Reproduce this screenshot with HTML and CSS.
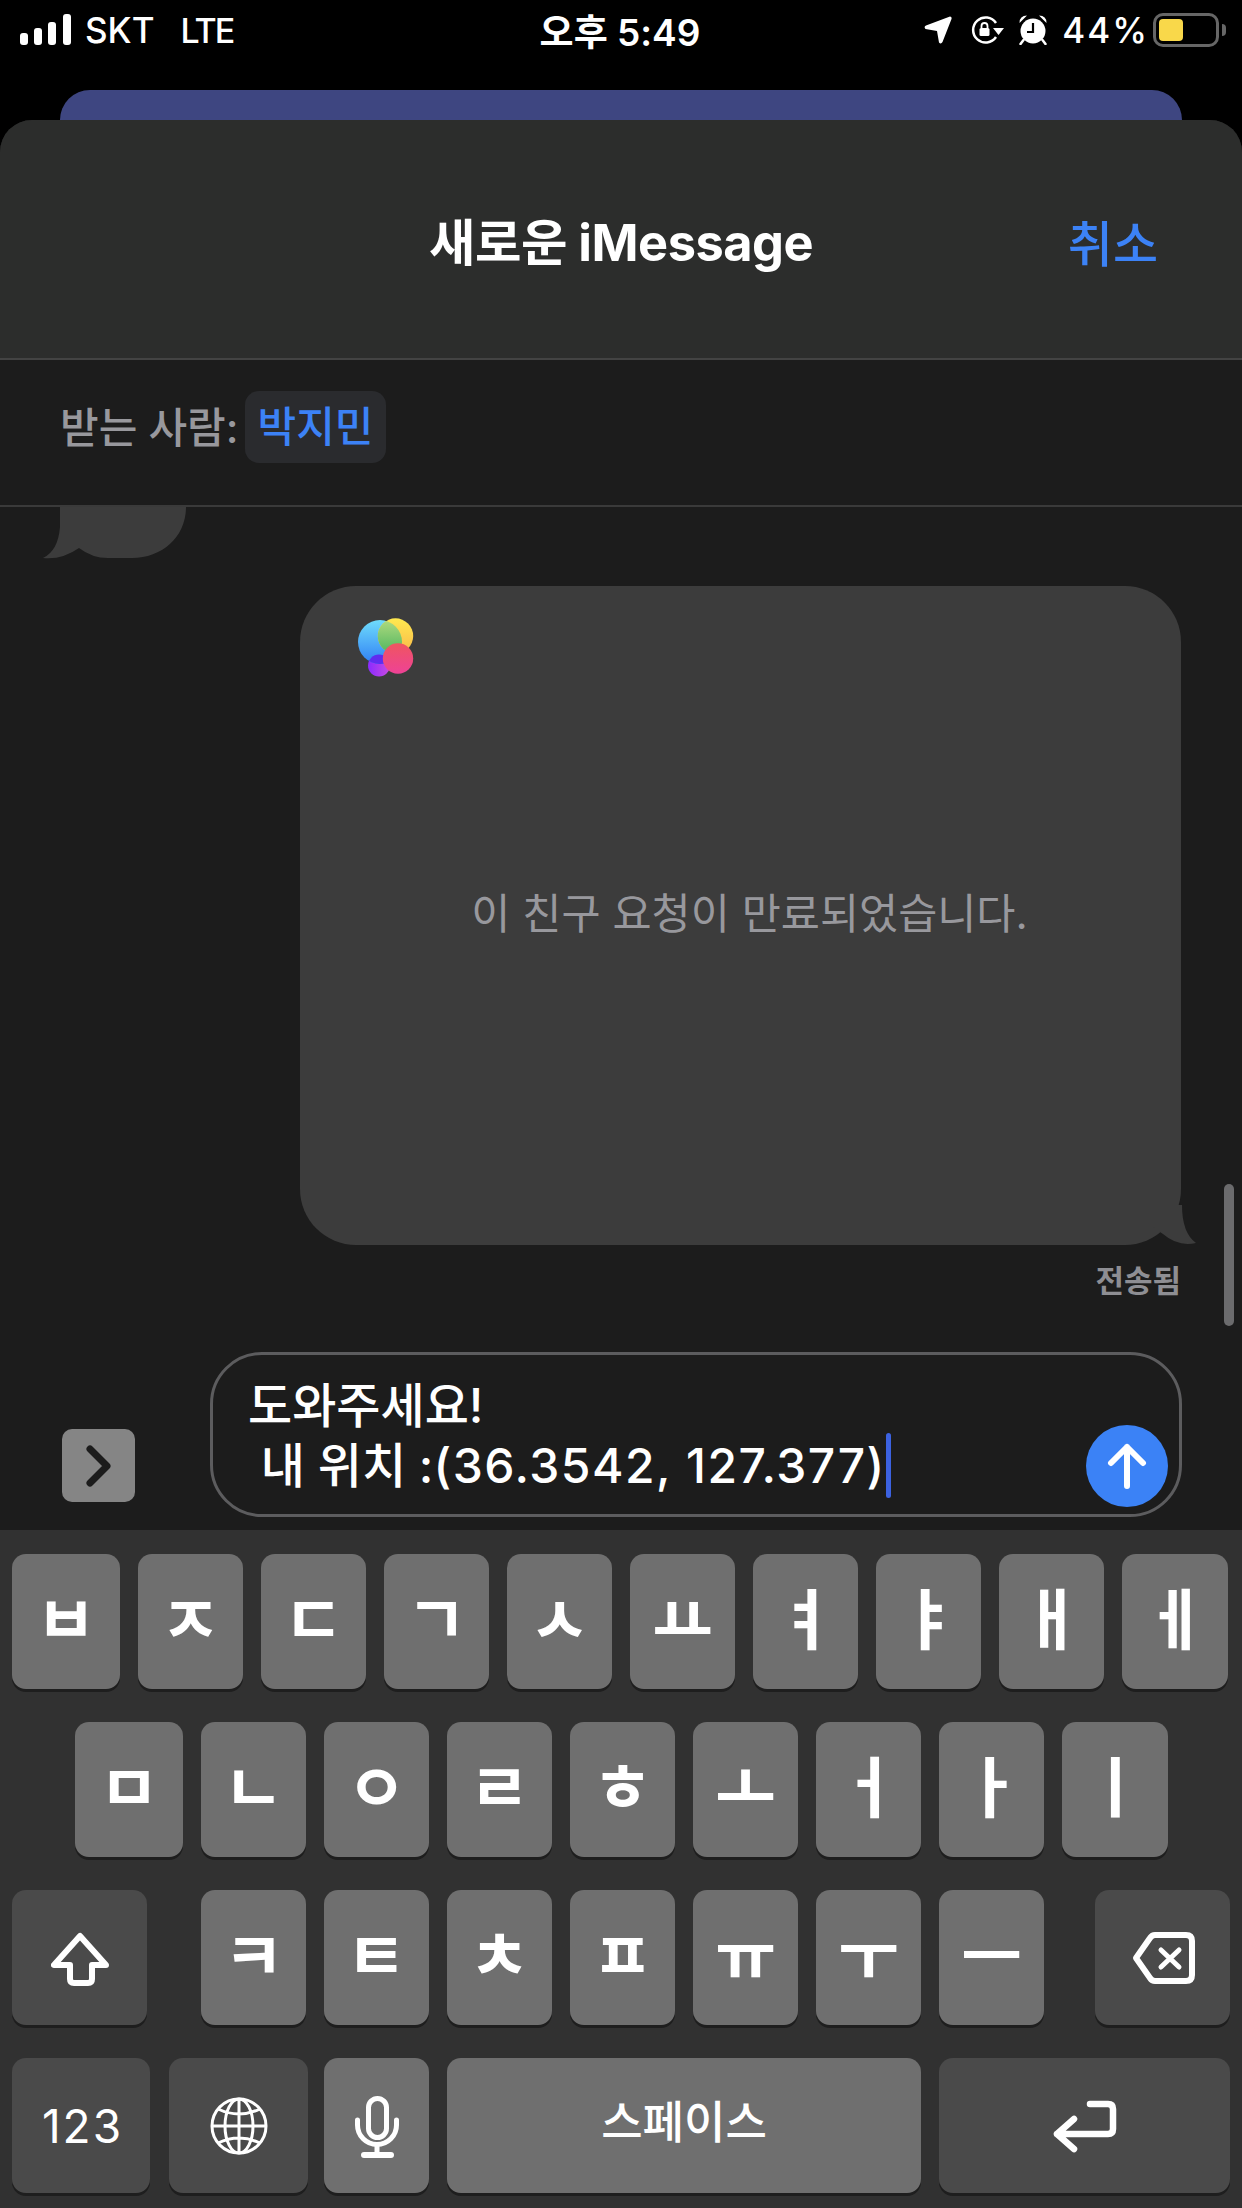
FILE: index.html
```html
<!DOCTYPE html>
<html lang="ko">
<head>
    <meta charset="UTF-8">
    <meta name="viewport" content="width=device-width, initial-scale=1.0">
    <title>새로운 iMessage</title>
    <link rel="stylesheet" href="styles.css">
</head>
<body>

<div class="status-bar">
    <div class="status-left">
        <svg class="signal" width="51" height="31" viewBox="0 0 51 31" fill="#fff">
            <rect x="0" y="19" width="8" height="12" rx="3"/>
            <rect x="14" y="14" width="8" height="17" rx="3"/>
            <rect x="28" y="8" width="8" height="23" rx="3"/>
            <rect x="43" y="0" width="8" height="31" rx="3"/>
        </svg>
        <span class="carrier">SKT</span>
        <span class="network">LTE</span>
    </div>
    <div class="status-time">오후 5:49</div>
    <div class="status-right">
        <svg class="icon-location" width="28" height="28" viewBox="0 0 28 28" fill="#fff"><path d="M26 0.500 Q28 0.500 27.500 3 L18.500 26 Q17 28.500 15 26.500 L13 15 L1.500 13 Q-0.500 11 2 9.500 Z"/></svg>
        <svg class="icon-lock" width="34" height="28" viewBox="0 0 34 28" fill="none" stroke="#fff" stroke-width="2.500">
            <path d="M25 21 A12.500 12.500 0 1 1 25 7"/>
            <path d="M22 12 L33 12 L27.500 19 Z" fill="#fff" stroke="none"/>
            <rect x="8.500" y="12" width="10" height="8" rx="1.500" fill="#fff" stroke="none"/>
            <path d="M10.500 12 V10 A3 3 0 0 1 16.500 10 V12" stroke-width="1.800"/>
        </svg>
        <svg class="icon-alarm" width="28" height="30" viewBox="0 0 28 30" fill="#fff">
            <circle cx="14" cy="16" r="12.500"/>
            <path d="M0.500 8 Q0.500 0.500 8 0.500 Z M27.500 8 Q27.500 0.500 20 0.500 Z"/>
            <path d="M4.500 25 L1.500 29 M23.500 25 L26.500 29" stroke="#fff" stroke-width="2.500" stroke-linecap="round"/>
            <path d="M14 8 V17 H8" fill="none" stroke="#000" stroke-width="2.200"/>
        </svg>
        <span class="battery-text">44%</span>
        <div class="battery"><div class="battery-level"></div></div>
        <div class="battery-cap"></div>
    </div>
</div>

<div class="back-card"></div>

<div class="sheet">
    <div class="sheet-header">
        <div class="sheet-title">새로운 iMessage</div>
        <div class="sheet-cancel">취소</div>
    </div>
    <div class="recipient-row">
        <span class="recipient-label">받는 사람:</span>
        <span class="recipient-chip">박지민</span>
    </div>

    <div class="thread">
        <svg class="stub" width="170" height="52" viewBox="0 0 170 52" fill="#3c3c3c">
            <path d="M40 0 H166 C166 30 142 51 112 51 H88 Q72 51 59 41 Q42 53 23 51 Q38 44 40 20 Z"/>
        </svg>

        <div class="bubble">
            <svg class="gc-icon" width="64" height="68" viewBox="0 0 64 68">
                <defs>
                    <linearGradient id="gcBlue" x1="0" y1="0" x2="0" y2="1"><stop offset="0" stop-color="#6fdcfb"/><stop offset="1" stop-color="#2f7ff5"/></linearGradient>
                    <linearGradient id="gcYellow" x1="0" y1="0" x2="0" y2="1"><stop offset="0" stop-color="#ffe94f"/><stop offset="1" stop-color="#f9b84a"/></linearGradient>
                    <linearGradient id="gcGreen" x1="0" y1="0" x2="0" y2="1"><stop offset="0" stop-color="#b4dc80"/><stop offset="1" stop-color="#4fb55f"/></linearGradient>
                    <linearGradient id="gcPink" x1="0" y1="0" x2="0" y2="1"><stop offset="0" stop-color="#ef5560"/><stop offset="1" stop-color="#ee4296"/></linearGradient>
                    <linearGradient id="gcPurple" x1="0" y1="0" x2="1" y2="0"><stop offset="0" stop-color="#8a2bff"/><stop offset="1" stop-color="#c94be0"/></linearGradient>
                    <clipPath id="gcClip"><circle cx="27" cy="28" r="22"/></clipPath>
                </defs>
                <circle cx="26" cy="51.500" r="11" fill="url(#gcPurple)"/>
                <circle cx="27" cy="28" r="22" fill="url(#gcBlue)"/>
                <circle cx="42.500" cy="22" r="17.700" fill="url(#gcYellow)"/>
                <circle cx="42.500" cy="22" r="17.700" fill="url(#gcGreen)" clip-path="url(#gcClip)"/>
                <circle cx="26" cy="51.500" r="11" fill="#5f2cf0" clip-path="url(#gcClip)"/>
                <circle cx="45" cy="44.500" r="15.200" fill="url(#gcPink)"/>
            </svg>
            <div class="bubble-text">이 친구 요청이 만료되었습니다.</div>
            <svg class="bubble-tail" width="50" height="40" viewBox="0 0 50 40" fill="#3c3c3c">
                <path d="M32 0 Q32 28 46 38 Q28 42 13 29 L0 20 V0 Z"/>
            </svg>
        </div>
        <div class="delivered">전송됨</div>
        <div class="scroll-thumb"></div>
    </div>

    <div class="composer">
        <button class="apps-btn">
            <svg width="30" height="44" viewBox="0 0 30 44" fill="none" stroke="#1c1c1c" stroke-width="7" stroke-linecap="round" stroke-linejoin="round"><path d="M6 5 L23 22 L6 39"/></svg>
        </button>
        <div class="input-box">
            <div class="input-text">도와주세요!<br>&nbsp;내 위치 :<span class="input-coords">(36.3542, 127.377)</span><span class="caret"></span></div>
            <div class="send-btn">
                <svg width="42" height="46" viewBox="0 0 42 46" fill="none" stroke="#fff" stroke-width="6" stroke-linecap="round" stroke-linejoin="round"><path d="M21 43 V4 M5 20 L21 4 L37 20"/></svg>
            </div>
        </div>
    </div>
</div>

<div class="keyboard">
    <div class="kb-row">
        <div class="key wide">ㅂ</div><div class="key">ㅈ</div><div class="key">ㄷ</div><div class="key">ㄱ</div><div class="key">ㅅ</div><div class="key">ㅛ</div><div class="key">ㅕ</div><div class="key">ㅑ</div><div class="key">ㅐ</div><div class="key last">ㅔ</div>
    </div>
    <div class="kb-row row-indent">
        <div class="key wide">ㅁ</div><div class="key">ㄴ</div><div class="key">ㅇ</div><div class="key">ㄹ</div><div class="key">ㅎ</div><div class="key">ㅗ</div><div class="key">ㅓ</div><div class="key">ㅏ</div><div class="key last">ㅣ</div>
    </div>
    <div class="kb-row">
        <div class="key dark shift">
            <svg width="58" height="58" viewBox="0 0 58 58" fill="none" stroke="#fff" stroke-width="6" stroke-linejoin="round"><path d="M29 5 L3 34 H19 V48 Q19 52 23 52 H37 Q41 52 41 48 V34 H55 Z"/></svg>
        </div>
        <div class="key">ㅋ</div><div class="key">ㅌ</div><div class="key">ㅊ</div><div class="key">ㅍ</div><div class="key">ㅠ</div><div class="key">ㅜ</div><div class="key">ㅡ</div>
        <div class="key dark delete">
            <svg width="64" height="54" viewBox="0 0 64 54" fill="none" stroke="#fff" stroke-width="6" stroke-linejoin="round" stroke-linecap="round"><path d="M23 4 H54 Q60 4 60 10 V44 Q60 50 54 50 H23 Q20 50 18 47 L4 27 L18 7 Q20 4 23 4 Z"/><path d="M29 19 L47 36 M47 19 L29 36" stroke-width="5"/></svg>
        </div>
    </div>
    <div class="kb-row">
        <div class="key dark num">123</div>
        <div class="key dark globe">
            <svg width="58" height="58" viewBox="0 0 58 58" fill="none" stroke="#fff" stroke-width="3"><circle cx="29" cy="29" r="27"/><ellipse cx="29" cy="29" rx="14" ry="27"/><path d="M29 2 V56 M2 29 H56 M8 12 Q29 22 50 12 M8 46 Q29 36 50 46"/></svg>
        </div>
        <div class="key mic">
            <svg width="46" height="66" viewBox="0 0 46 66" fill="none" stroke="#fff" stroke-width="5" stroke-linecap="round"><rect x="14.500" y="4.500" width="18" height="39" rx="9"/><path d="M3.500 26 V31 A19.500 19.500 0 0 0 42.500 31 V26 M23 51 V60"/><path d="M10 61 H37" stroke-width="6"/></svg>
        </div>
        <div class="key space">스페이스</div>
        <div class="key dark return">
            <svg width="70" height="58" viewBox="0 0 70 58" fill="none" stroke="#fff" stroke-width="6.500" stroke-linecap="round" stroke-linejoin="round"><path d="M40 6 H58 Q63 6 63 11 V31 Q63 36 58 36 H7 M24 21 L7 36 L24 51"/></svg>
        </div>
    </div>
</div>

</body>
</html>
```

FILE: styles.css
```css
* {
    box-sizing: border-box;
}
body {
    margin: 0;
    width: 1242px;
    height: 2208px;
    overflow: hidden;
    background-color: #000;
    color: #fff;
    font-family: Inter, "Noto Sans CJK KR", sans-serif;
}

/* Status bar */
.status-bar {
    display: flex;
    align-items: center;
    justify-content: space-between;
    height: 62px;
    padding: 0 16px 2px 20px;
    font-size: 35px;
    font-weight: 500;
}
.status-left, .status-right {
    display: flex;
    align-items: center;
}
.status-left {
    width: 387px;
}
.status-right {
    width: 393px;
    justify-content: flex-end;
}
.signal {
    margin: 0 14px 2px 0;
}
.network {
    margin-left: 26px;
    font-size: 34px;
    letter-spacing: -2px;
}
.status-time {
    font-size: 37px;
    font-weight: 600;
}
.icon-lock {
    margin-left: 19px;
}
.icon-alarm {
    margin-left: 14px;
}
.battery-text {
    margin-left: 15px;
    letter-spacing: 2px;
}
.battery {
    width: 66px;
    height: 34px;
    padding: 3px;
    margin-left: 4px;
    border: 3px solid #666;
    border-radius: 10px;
}
.battery-level {
    width: 24px;
    height: 100%;
    background-color: #f9d84a;
    border-radius: 4px;
}
.battery-cap {
    width: 4px;
    height: 12px;
    margin-left: 3px;
    background-color: #666;
    border-radius: 0 4px 4px 0;
}

.back-card {
    height: 58px;
    margin: 28px 60px -28px;
    background-color: #3e4681;
    border-radius: 30px 30px 0 0;
}

/* Sheet */
.sheet {
    position: relative;
    height: 1410px;
    background-color: #1c1c1c;
    border-radius: 32px 32px 0 0;
    overflow: hidden;
}
.sheet-header {
    position: relative;
    height: 240px;
    display: flex;
    align-items: center;
    justify-content: center;
    background-color: #2c2d2c;
    border-bottom: 2px solid #434343;
}
.sheet-title {
    font-size: 50.500px;
    font-weight: 700;
    letter-spacing: -0.5px;
}
.sheet-cancel {
    position: absolute;
    right: 84px;
    top: 90px;
    font-size: 49px;
    font-weight: 500;
    line-height: 70px;
    color: #3c82f6;
}
.recipient-row {
    display: flex;
    align-items: center;
    height: 147px;
    padding: 0 0 12px 60px;
    border-bottom: 2px solid #3a3a3a;
    font-size: 42px;
    font-weight: 500;
}
.recipient-label {
    color: #98989d;
    margin: 0 6px 4px 0;
}
.recipient-chip {
    height: 72px;
    padding: 0 13px;
    line-height: 72px;
    color: #3c82f6;
    background-color: #2a2b2e;
    border-radius: 14px;
}

/* Messages */
.thread {
    position: relative;
    height: 848px;
}
.stub {
    display: block;
    margin-left: 20px;
}
.bubble {
    position: relative;
    width: 881px;
    height: 659px;
    margin: 27px 0 0 300px;
    display: flex;
    align-items: center;
    justify-content: center;
    background-color: #3c3c3c;
    border-radius: 56px;
}
.gc-icon {
    position: absolute;
    left: 53px;
    top: 28px;
}
.bubble-text {
    margin: -10px 0 0 18px;
    font-size: 42.500px;
    color: #98989d;
}
.bubble-tail {
    position: absolute;
    right: -19px;
    bottom: 0;
}
.delivered {
    margin: 11px 61px 0 0;
    text-align: right;
    font-size: 31px;
    font-weight: 700;
    color: #8e8e93;
}
.scroll-thumb {
    position: absolute;
    top: 677px;
    right: 8px;
    width: 10px;
    height: 142px;
    background-color: #6b6b6d;
    border-radius: 5px;
}

/* Composer */
.composer {
    display: flex;
    align-items: flex-end;
    height: 175px;
    padding: 0 60px 13px 62px;
}
.apps-btn {
    display: flex;
    align-items: center;
    justify-content: center;
    width: 73px;
    height: 73px;
    margin: 0 75px 15px 0;
    padding: 0;
    border: none;
    border-radius: 10px;
    background-color: #858585;
}
.input-box {
    position: relative;
    width: 972px;
    height: 165px;
    padding: 21px 35px;
    border: 3px solid #5c5c5e;
    border-radius: 52px;
}
.input-text {
    font-size: 48px;
    line-height: 60px;
    font-weight: 500;
    white-space: nowrap;
}
.input-coords {
    letter-spacing: 1.500px;
}
.caret {
    display: inline-block;
    width: 5px;
    height: 65px;
    margin: -10px 0 -2px;
    vertical-align: middle;
    background-color: #3c62e0;
    border-radius: 3px;
}
.send-btn {
    position: absolute;
    right: 11px;
    bottom: 7px;
    width: 82px;
    height: 82px;
    display: flex;
    align-items: center;
    justify-content: center;
    background-color: #3b82f6;
    border-radius: 50%;
}

/* Keyboard */
.keyboard {
    height: 678px;
    padding: 24px 12px 0;
    background-color: #313131;
}
.kb-row {
    display: flex;
    gap: 18px;
    height: 135px;
    margin-bottom: 33px;
}
.row-indent {
    padding-left: 63px;
}
.key {
    display: flex;
    align-items: center;
    justify-content: center;
    flex: 0 0 105px;
    padding-bottom: 14px;
    font-family: "Noto Sans CJK KR", sans-serif;
    font-size: 66px;
    font-weight: 600;
    background-color: #6f6f6f;
    border-radius: 14px;
    box-shadow: 0 3px 0 #1e1e1e;
}
.key.wide {
    flex-basis: 108px;
}
.key.last {
    flex-basis: 106px;
}
.key.dark {
    background-color: #4a4a4a;
}
.key.shift {
    flex-basis: 135px;
    margin-right: 36px;
    padding: 41px 0 0;
    align-items: flex-start;
}
.key.delete {
    flex-basis: 135px;
    margin-left: 33px;
    padding: 0 0 0 2px;
}
.key.num {
    flex-basis: 138px;
    padding: 0 0 0 3px;
    font-family: Inter, sans-serif;
    font-size: 46px;
    font-weight: 400;
    letter-spacing: 2px;
}
.key.globe {
    flex-basis: 139px;
    margin: 0 -2px 0 1px;
    padding-bottom: 0;
}
.key.mic {
    padding: 3px 0 0;
}
.key.space {
    flex-basis: 474px;
    padding-bottom: 12px;
    font-size: 45px;
    font-weight: 500;
}
.key.return {
    flex-basis: 291px;
    padding: 3px 0 0;
}
```
